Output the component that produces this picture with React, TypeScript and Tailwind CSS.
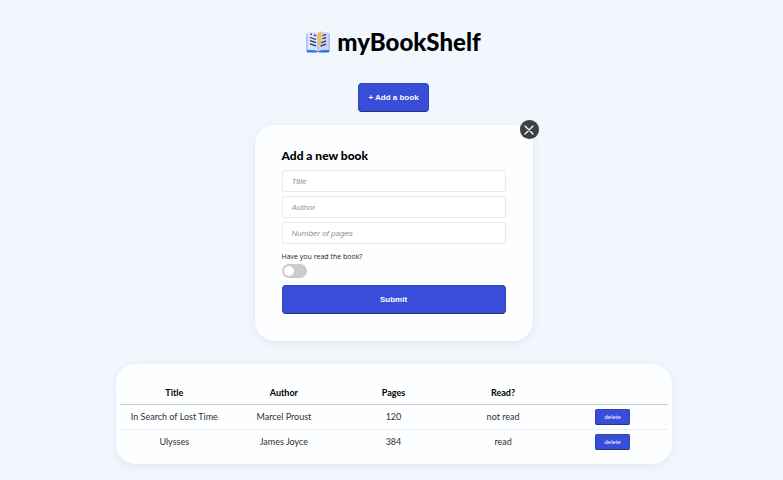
import { useState } from "react";

type Book = { title: string; author: string; pages: number; read: boolean };

const initialBooks: Book[] = [
  { title: "In Search of Lost Time", author: "Marcel Proust", pages: 120, read: false },
  { title: "Ulysses", author: "James Joyce", pages: 384, read: true },
];

const fields = [
  { id: "title", label: "Title" },
  { id: "author", label: "Author" },
  { id: "pages", label: "Number of pages" },
];

const buttonLook =
  "border border-[#3343b4] border-b-[#26327f] bg-[#384dd8] font-['Liberation_Sans',Arial,sans-serif] text-white";

function BookLogo() {
  return (
    <svg viewBox="0 0 24 22" className="h-[22px] w-6" aria-hidden="true">
      <path d="M1.500 3.500 Q.5 3.500 .5 5V20Q.5 21.500 2 21.500H10.500L12 20.800L13.500 21.500H22Q23.500 21.500 23.500 20V5Z" fill="#1f76e8" />
      <path d="M.5 2.500Q7-.3 12 2.200V20.300Q7 18.300 .5 19.300Z" fill="#dfe1fc" />
      <path d="M23.500 2.500Q17-.3 12 2.200V20.300Q17 18.300 23.500 19.300Z" fill="#cdd2fa" />
      <path d="M1 2.500V19.300M23 2.500V19.300" stroke="#aeb2ee" strokeWidth="1" />
      <path d="M12 2.500V20" stroke="#8f9ce4" strokeWidth=".8" />
      <path d="M4.500 3.300L6 3M8 3.800L10 4.800M4 6.500L10 8.500M4 9.700L10 11.700M4 12.900L10 14.900M16.500 4.500L20 3.500M16.500 7.700L20 6.700M15 12L20 9.900M14.500 15.200L20 13.200" fill="none" stroke="#26364f" strokeWidth="1.300" />
      <path d="M12.300 1L15.300 .3V12L13.800 14L12.300 12.500Z" fill="#f8c52c" />
    </svg>
  );
}

export default function App() {
  const [books, setBooks] = useState(initialBooks);
  const [open, setOpen] = useState(true);

  return (
    <main className="flex min-h-screen flex-col items-center bg-[#f2f7fe] pt-[26px] pr-4 pb-4 pl-5 font-[Lato,'Open_Sans',sans-serif] text-black">
      <h1 className="flex items-center gap-[7px] text-2xl leading-8 font-black">
        <BookLogo />
        myBookShelf
      </h1>

      <button
        type="button"
        onClick={() => setOpen(true)}
        className={`mt-[25px] h-[29px] rounded px-[9px] text-[8px] font-bold ${buttonLook}`}
      >
        + Add a book
      </button>

      {open && (
        <form
          onSubmit={(e) => e.preventDefault()}
          className="relative mt-[13px] flex w-full max-w-[278px] flex-col rounded-[20px] bg-[#fdfeff] px-[27px] pt-[23px] pb-[27px] shadow-[0_2px_8px_rgba(90,120,160,0.12)]"
        >
          <button
            type="button"
            aria-label="Close"
            onClick={() => setOpen(false)}
            className="absolute -top-[5px] -right-[6px] flex size-[19px] items-center justify-center rounded-full bg-[#404040] shadow-[0_0_1px_rgba(120,120,120,0.6)]"
          >
            <svg viewBox="0 0 10 10" className="size-[10px]" fill="none" stroke="#fff" strokeWidth="1.3" strokeLinecap="round">
              <path d="M1 1L9 9M9 1L1 9" />
            </svg>
          </button>

          <h2 className="text-xs leading-4 font-black">Add a new book</h2>
          <div className="mt-[6px] flex flex-col gap-1">
            {fields.map((f) => (
              <input
                key={f.id}
                id={f.id}
                aria-label={f.label}
                placeholder={f.label}
                className="h-[22px] w-full rounded-[2px] border border-[#e5ebf3] bg-white px-[9px] font-['Liberation_Sans',Arial,sans-serif] text-[8px] placeholder:text-[#929292] placeholder:italic"
              />
            ))}
          </div>
          <label htmlFor="read" className="mt-[7px] font-['Open_Sans',sans-serif] text-[7px] leading-3 text-[#222]">
            Have you read the book?
          </label>
          <input
            id="read"
            type="checkbox"
            className="mt-px h-[14px] w-[25px] appearance-none rounded-full bg-[#cbcbcb] p-[2px] before:block before:size-[10px] before:rounded-full before:bg-white checked:bg-[#384dd8] checked:before:ml-[11px]"
          />
          <button type="submit" className={`mt-[7px] h-[29px] w-full rounded text-[8px] font-bold ${buttonLook}`}>
            Submit
          </button>
        </form>
      )}

      <section className="mt-[23px] w-full max-w-[556px] rounded-[20px] bg-[#fdfeff] px-1 pt-[18px] pb-[10px] shadow-[0_2px_8px_rgba(90,120,160,0.12)]">
        <table className="w-full table-fixed border-collapse text-center text-[9px] leading-3">
          <thead>
            <tr className="h-[22px] border-b border-[#c6cacb] font-black">
              <th scope="col">Title</th>
              <th scope="col">Author</th>
              <th scope="col">Pages</th>
              <th scope="col">Read?</th>
              <td />
            </tr>
          </thead>
          <tbody className="text-[#303030]">
            {books.map((b) => (
              <tr key={b.title} className="h-[25px] border-b border-[#e7eef3] last:border-b-0">
                <td>{b.title}</td>
                <td>{b.author}</td>
                <td>{b.pages}</td>
                <td>{b.read ? "read" : "not read"}</td>
                <td>
                  <button
                    type="button"
                    onClick={() => setBooks(books.filter((x) => x !== b))}
                    className={`mx-auto block h-4 w-[35px] rounded-[2px] text-[6px] leading-3 ${buttonLook}`}
                  >
                    delete
                  </button>
                </td>
              </tr>
            ))}
          </tbody>
        </table>
      </section>
    </main>
  );
}
